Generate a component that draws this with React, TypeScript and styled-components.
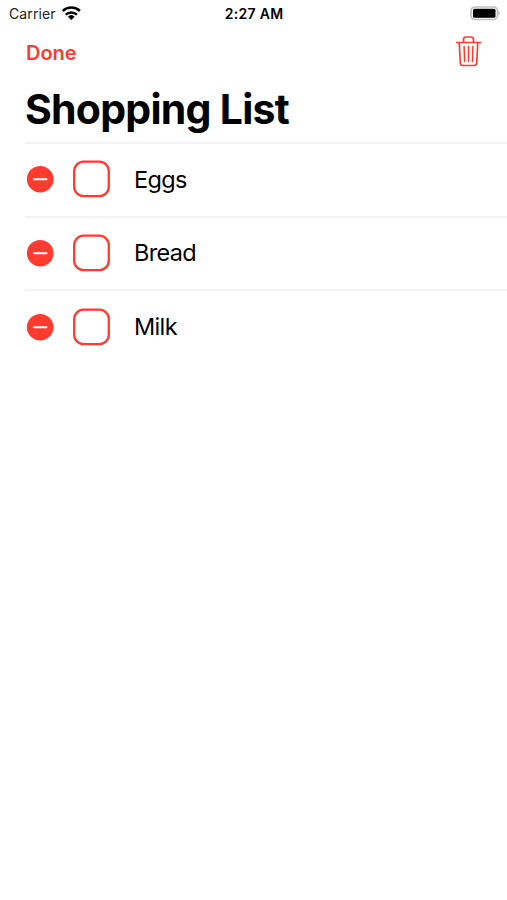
import React from "react";
import styled, { createGlobalStyle } from "styled-components";

const RED = "#ff3b30";

const GlobalStyle = createGlobalStyle`
  body { margin: 0; background: #fff; }
  * { box-sizing: border-box; }
`;
const Screen = styled.main`
  width: 507px;
  height: 900px;
  background: #fff;
  color: #000;
  font-family: Inter, sans-serif;
  overflow: hidden;
`;
const StatusBar = styled.header`
  display: grid;
  grid-template-columns: 1fr auto 1fr;
  align-items: center;
  height: 27px;
  padding: 0 6px 0 9px;
`;
const Carrier = styled.div`
  display: flex;
  align-items: center;
  gap: 6px;
  color: #222;
  font-size: 14px;
  letter-spacing: 0.1px;
`;
const WifiIcon = styled.svg`
  display: block;
  margin-bottom: 2px;
`;
const Clock = styled.time`
  margin-right: 2px;
  font-size: 14px;
  font-weight: 600;
  letter-spacing: 0.3px;
`;
const Battery = styled.svg`
  justify-self: end;
  display: block;
`;
const NavBar = styled.nav`
  display: flex;
  justify-content: space-between;
  align-items: center;
  height: 50px;
  padding: 0 26px;
`;
const TextButton = styled.button`
  border: 0;
  padding: 1px 0 0;
  background: none;
  color: ${RED};
  font: 600 20px Inter, sans-serif;
`;
const IconButton = styled.button`
  display: flex;
  border: 0;
  padding: 0 0 2px;
  background: none;
`;
const Title = styled.h1`
  margin: 0;
  height: 65px;
  padding-left: 25px;
  font-size: 41px;
  line-height: 64px;
  font-weight: 700;
  letter-spacing: -0.75px;
`;
const List = styled.ul`
  margin: 0 0 0 25px;
  padding: 0;
  list-style: none;
`;
const Row = styled.li`
  display: flex;
  align-items: center;
  height: 73.7px;
  padding-bottom: 1.4px;
  border-top: 2px solid #f3f3f4;
`;
const RemoveButton = styled.button`
  display: flex;
  border: 0;
  padding: 0;
  margin: 0 18px 0 1px;
  background: none;
`;
const Checkbox = styled.svg`
  display: block;
  margin-right: 24px;
`;
const Label = styled.span`
  font-size: 23.5px;
  letter-spacing: -0.65px;
`;

export default function App() {
  return (
    <>
      <GlobalStyle />
      <Screen>
        <StatusBar>
          <Carrier>
            Carrier
            <WifiIcon width="19" height="14" viewBox="0 0 19 14" fill="none" stroke="#000" strokeWidth="2.500">
              <path d="M.7 5a12.500 12.500 0 0 1 17.200 0M3.700 8.600a8.200 8.200 0 0 1 11.200 0" />
              <path d="M5.900 10.700a5 5 0 0 1 6.800 0L9.300 14Z" fill="#000" stroke="none" />
            </WifiIcon>
          </Carrier>
          <Clock>2:27 AM</Clock>
          <Battery width="31" height="15" viewBox="0 0 31 15">
            <rect x="1" y="1" width="26.500" height="12.500" rx="4" fill="none" stroke="#c0c0c0" strokeWidth="1.700" />
            <rect x="3" y="2.800" width="22.500" height="9" rx="1.500" />
            <path d="M28.500 5q2.500 2.500 0 5Z" fill="#aaa" />
          </Battery>
        </StatusBar>
        <NavBar>
          <TextButton>Done</TextButton>
          <IconButton aria-label="Delete all">
            <svg width="26" height="31" viewBox="0 0 26 31" fill="none" stroke={RED} strokeWidth="1.700" strokeLinecap="round">
              <path d="M1.700 6.500h23.600M8.500 6.500V3.500q0-2.500 2.500-2.500h5q2.500 0 2.500 2.500v3M4.200 6.500l1.100 20.500q.2 2.500 2.600 2.500h11.200q2.400 0 2.600-2.500l1.100-20.500" />
              <path d="M9.100 10.500l.5 15M13.500 10.500v15M17.900 10.500l-.5 15" strokeWidth="1.500" />
            </svg>
          </IconButton>
        </NavBar>
        <Title>Shopping List</Title>
        <List>
          {["Eggs", "Bread", "Milk"].map((item) => (
            <Row key={item}>
              <RemoveButton aria-label={`Remove ${item}`}>
                <svg width="28" height="28" viewBox="0 0 28 28">
                  <circle cx="14.200" cy="14.200" r="13.300" fill={RED} />
                  <path d="M8 14.200h12.500" stroke="#fff" strokeWidth="2" strokeLinecap="round" />
                </svg>
              </RemoveButton>
              <Checkbox width="38" height="38" viewBox="0 0 38 38" role="checkbox" aria-checked={false} aria-label={item}>
                <rect x="2.200" y="1.600" width="34.600" height="34.600" rx="9.500" fill="none" stroke={RED} strokeWidth="2.300" />
              </Checkbox>
              <Label>{item}</Label>
            </Row>
          ))}
        </List>
      </Screen>
    </>
  );
}
